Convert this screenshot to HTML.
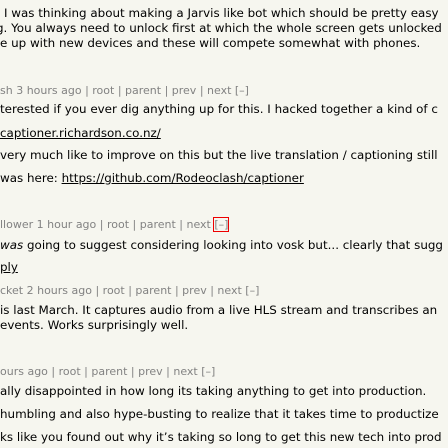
<!DOCTYPE html>
<html><head><style>
html,body{margin:0;padding:0;background:#f6f6ef;width:448px;height:448px;overflow:hidden;position:relative}
div{position:absolute;white-space:nowrap;font-family:"DejaVu Sans","Liberation Sans",sans-serif;}
.t{font-size:11.9px;color:#000;}
.m{font-size:11px;color:#828282;}
a{color:#000;text-decoration:underline}
.box{outline:1px solid #e00;}
</style></head><body>
<div class="t" style="left:4px;top:6px">I was thinking about making a Jarvis like bot which should be pretty easy</div>
<div class="t" style="left:-4px;top:21px">g. You always need to unlock first at which the whole screen gets unlocked</div>
<div class="t" style="left:0px;top:36px">e up with new devices and these will compete somewhat with phones.</div>

<div class="m" style="left:0px;top:84px">sh 3 hours ago | root | parent | prev | next [–]</div>
<div class="t" style="left:0px;top:102px">terested if you ever dig anything up for this. I hacked together a kind of c</div>
<div class="t" style="left:0px;top:126px"><a>captioner.richardson.co.nz/</a></div>
<div class="t" style="left:0px;top:148px">very much like to improve on this but the live translation / captioning still</div>
<div class="t" style="left:0px;top:171px">was here: <a>https://github.com/Rodeoclash/captioner</a></div>

<div class="m" style="left:0px;top:218px">llower 1 hour ago | root | parent | next <span class="box">[–]</span></div>
<div class="t" style="left:0px;top:238px"><i>was</i> going to suggest considering looking into vosk but... clearly that sugg</div>
<div class="t" style="left:0px;top:260px"><a>ply</a></div>
<div class="m" style="left:0px;top:284px">cket 2 hours ago | root | parent | prev | next [–]</div>
<div class="t" style="left:0px;top:303px">is last March. It captures audio from a live HLS stream and transcribes an</div>
<div class="t" style="left:0px;top:318px">events. Works surprisingly well.</div>

<div class="m" style="left:0px;top:365px">ours ago | root | parent | prev | next [–]</div>
<div class="t" style="left:0px;top:384px">ally disappointed in how long its taking anything to get into production.</div>
<div class="t" style="left:0px;top:407px">humbling and also hype-busting to realize that it takes time to productize</div>
<div class="t" style="left:0px;top:430px">ks like you found out why it’s taking so long to get this new tech into prod</div>
</body></html>
